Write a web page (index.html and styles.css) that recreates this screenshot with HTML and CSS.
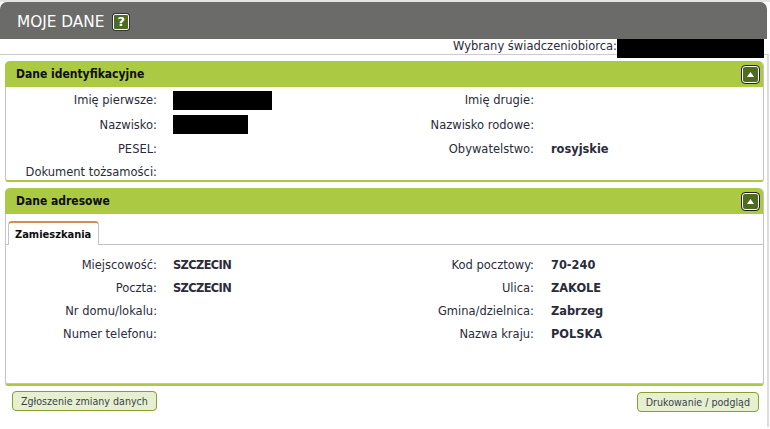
FILE: index.html
```html
<!DOCTYPE html>
<html lang="pl">
<head>
<meta charset="utf-8">
<title>Moje dane</title>
<link rel="stylesheet" href="styles.css">
</head>
<body>
<div class="page">
  <header class="title-bar">
    <h1 class="title">MOJE DANE</h1>
    <span class="help">?</span>
  </header>
  <div class="selected">
    <span>Wybrany świadczeniobiorca:</span><span class="redact redact-person"></span>
  </div>
  <main class="content">
    <section class="panel panel-id">
      <div class="panel-head">
        <h2 class="panel-title">Dane identyfikacyjne</h2>
        <span class="toggle"><svg width="7" height="5" viewBox="0 0 7 5"><path d="M3.5 0 7 5H0Z" fill="#fff"/></svg></span>
      </div>
      <div class="fields fields-id">
        <div class="label">Imię pierwsze:</div><div class="value"><span class="redact redact-first"></span></div>
        <div class="label">Imię drugie:</div><div class="value value-right"></div>
        <div class="label">Nazwisko:</div><div class="value"><span class="redact redact-last"></span></div>
        <div class="label">Nazwisko rodowe:</div><div class="value value-right"></div>
        <div class="label">PESEL:</div><div class="value"></div>
        <div class="label">Obywatelstwo:</div><div class="value value-right">rosyjskie</div>
        <div class="label">Dokument tożsamości:</div><div class="value"></div>
      </div>
    </section>
    <section class="panel panel-address">
      <div class="panel-head">
        <h2 class="panel-title">Dane adresowe</h2>
        <span class="toggle"><svg width="7" height="5" viewBox="0 0 7 5"><path d="M3.5 0 7 5H0Z" fill="#fff"/></svg></span>
      </div>
      <div class="tabs"><span class="tab">Zamieszkania</span></div>
      <div class="fields">
        <div class="label">Miejscowość:</div><div class="value value-tight">SZCZECIN</div>
        <div class="label">Kod pocztowy:</div><div class="value value-right">70-240</div>
        <div class="label">Poczta:</div><div class="value value-tight">SZCZECIN</div>
        <div class="label">Ulica:</div><div class="value value-right">ZAKOLE</div>
        <div class="label">Nr domu/lokalu:</div><div class="value"></div>
        <div class="label">Gmina/dzielnica:</div><div class="value value-right">Zabrzeg</div>
        <div class="label">Numer telefonu:</div><div class="value"></div>
        <div class="label">Nazwa kraju:</div><div class="value value-right">POLSKA</div>
      </div>
    </section>
    <div class="actions">
      <button class="btn" type="button">Zgłoszenie zmiany danych</button>
      <button class="btn btn-print" type="button">Drukowanie / podgląd</button>
    </div>
  </main>
</div>
</body>
</html>
```
FILE: styles.css
```css
* { box-sizing: border-box; }
html, body { margin: 0; height: 100%; background: #fff; overflow: hidden; }
body { font-family: "DejaVu Sans", sans-serif; font-size: 11.5px; color: #2b2b3a; }
.page { width: 770px; height: 429px; border-top: 2px solid #e4e4e4; }
.title-bar { width: 767px; height: 37px; background: #6b6c6a; border-radius: 7px 7px 0 0; display: flex; align-items: center; gap: 9px; padding: 2px 0 0 17px; }
.title { margin: 0; font-weight: 400; font-size: 15.3px; color: #fff; }
.help { width: 16px; height: 16px; border: 1px solid #fff; outline: 1px solid #333; border-radius: 2px; background: #4d6b21; color: #fff; font-weight: 700; font-size: 13px; line-height: 14px; text-align: center; }
.selected { width: 767px; height: 15px; display: flex; justify-content: flex-end; padding-right: 3px; line-height: 15px; }
.redact { display: block; flex: none; background: #000; }
.redact-person { width: 147px; height: 19px; position: relative; }
.redact-first { width: 99px; height: 19px; }
.redact-last { width: 75px; height: 19px; }
.content { width: 769px; height: 373px; border-top: 1px solid #ccc; border-right: 2px solid #dcdcdc; padding-top: 6px; }
.panel { width: 759px; margin-left: 5px; border: 1px solid #c0c2d0; border-top: 0; border-bottom: 2px solid #acc944; border-radius: 5px 5px 3px 3px; }
.panel-id { height: 121px; }
.panel-address { margin-top: 6px; height: 198px; box-shadow: inset 0 -1px 0 #c0c2d0; }
.panel-head { height: 26px; margin-left: -1px; background: #acc944; border-radius: 5px 5px 0 0; display: flex; align-items: center; justify-content: space-between; padding: 0 4px 0 11px; }
.panel-title { margin: 0; font-family: "DejaVu Sans Condensed", "DejaVu Sans", sans-serif; font-size: 12px; font-weight: 700; color: #0d0d0d; }
.toggle { width: 17px; height: 17px; background: #4d6b21; border: 1px solid #fff; outline: 1px solid #222; border-radius: 3px; display: flex; align-items: center; justify-content: center; }
.fields { display: grid; grid-template-columns: 151px 200px 177px 1fr; grid-auto-rows: 23px; align-items: center; }
.fields-id { padding-top: 1px; grid-template-rows: 24px 25px 23px 23px; }
.label { text-align: right; white-space: nowrap; }
.value { padding-left: 16px; font-size: 11.4px; font-weight: 700; white-space: nowrap; }
.value-right { padding-left: 17px; }
.value-tight { letter-spacing: -.6px; }
.tabs { display: flex; align-items: flex-end; height: 31px; padding-left: 2px; border-bottom: 1px solid #c0c2d0; margin-bottom: 8px; }
.tab { position: relative; top: 1px; height: 24px; padding: 5px 7px 0 6px; font-family: "DejaVu Sans Condensed", "DejaVu Sans", sans-serif; font-size: 11px; font-weight: 700; color: #0d0d0d; background: #fff; border: 1px solid #c0c2d0; border-top: 2px solid #d98c50; border-bottom: 0; border-radius: 4px 4px 0 0; }
.actions { display: flex; justify-content: space-between; align-items: flex-start; padding: 5px 8px 0 12px; }
.btn { height: 20px; padding: 0 8px; border: 1px solid #86a030; border-radius: 4px; background: #e6f0ce; color: #3c3f50; font: 10.6px "DejaVu Sans Condensed", "DejaVu Sans", sans-serif; }
.btn-print { margin-top: 1px; }
```
